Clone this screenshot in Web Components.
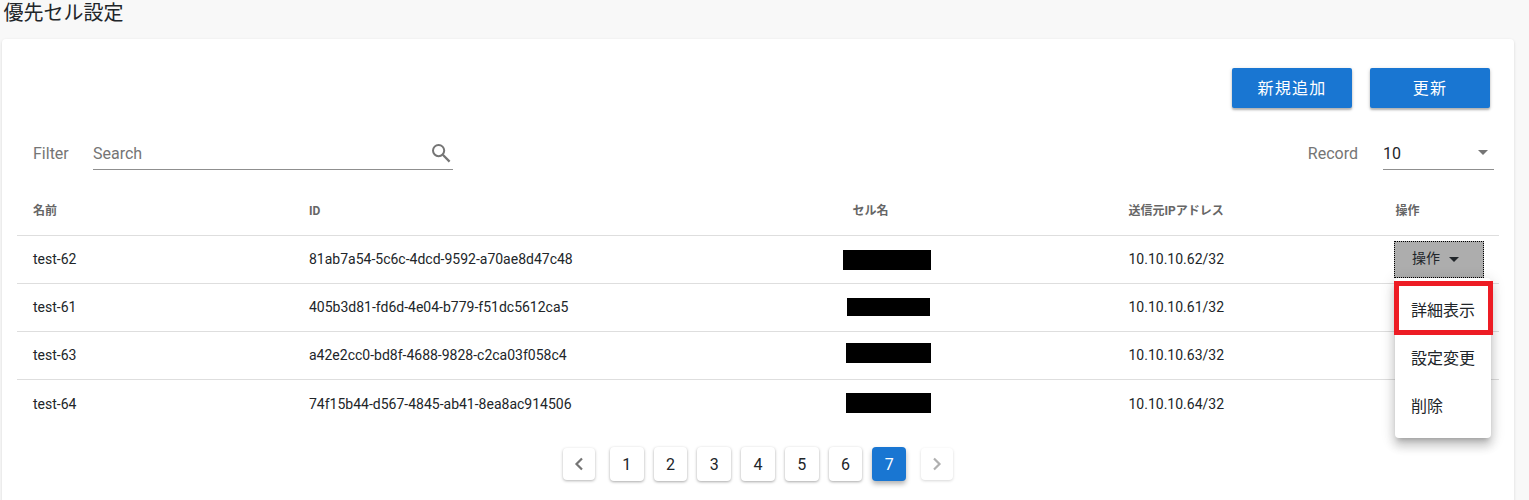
<!DOCTYPE html>
<html lang="ja"><head><meta charset="utf-8">
<style>
html,body{margin:0;padding:0;height:500px;overflow:hidden;background:#f8f8f8;}
body{font-family:Roboto,"Noto Sans CJK JP",sans-serif;color:#212529;}
</style></head><body>
<app-page></app-page>
<script>
const FONT='Roboto,"Noto Sans CJK JP",sans-serif';
function def(name,html,init){
  customElements.define(name,class extends HTMLElement{
    connectedCallback(){
      if(this.shadowRoot)return;
      const r=this.attachShadow({mode:'open'});
      r.innerHTML=typeof html==='function'?html(this):html;
      if(init)init(r,this);
    }
  });
}
def('app-button',`<style>:host{display:block}
button{display:block;width:120px;height:40px;border:0;border-radius:2px;background:#1976d2;color:#fff;font:16px ${FONT};letter-spacing:1.25px;padding:0 0 2px;
box-shadow:0 2px 2px rgba(0,0,0,.24),0 1px 4px rgba(0,0,0,.14);}</style><button><slot></slot></button>`);
def('search-field',`<style>:host{display:flex;align-items:center;height:33px;width:360px;border-bottom:1px solid #8f8f8f;justify-content:space-between;color:#757575;font-size:16px}
span{padding-top:2px}
svg{display:block;margin-right:2px}</style><span>Search</span>
<svg width="20" height="20" viewBox="0 0 20 20" fill="none" stroke="#757575" stroke-width="2"><circle cx="7.6" cy="7.6" r="5.6"/><path d="M11.8 11.8 18.6 18.6" stroke-width="2.3"/></svg>`);
def('record-select',`<style>:host{display:flex;align-items:center;justify-content:space-between;height:33px;width:111px;border-bottom:1px solid #8f8f8f;font-size:16px;color:#212529}
span{padding-top:2px}
i{display:block;width:0;height:0;border:5px solid transparent;border-top-color:#757575;border-bottom:0;margin-right:6px}</style><span>10</span><i></i>`);
const COLS='276px 500px 319.5px 251px 1fr';
def('table-head',`<style>:host{display:grid;grid-template-columns:${COLS};height:44px;padding-bottom:4px;align-items:center;padding-left:16px;width:1466px;border-bottom:1px solid #dedede;font-size:12px;font-weight:700;color:#666}
.cell{margin-left:43.5px}.op{margin-left:16px}.id{padding-top:4px}
</style><span>名前</span><span class="id">ID</span><span class="cell">セル名</span><span>送信元IPアドレス</span><span class="op">操作</span>`);
def('table-row',h=>`<style>:host{display:grid;grid-template-columns:${COLS};height:45px;padding-bottom:2px;align-items:center;padding-left:16px;width:1466px;border-bottom:1px solid #dedede;font-size:14px;color:#212529}
:host([last]){border-bottom:0;height:47px;padding-bottom:0}
.b{display:block;background:#000;height:${h.getAttribute('bh')||20}px;width:${h.getAttribute('bw')}px;margin-left:${h.getAttribute('bx')}px;position:relative;top:${h.getAttribute('bt')||0}px}</style>
<span>${h.getAttribute('n')}</span><span>${h.getAttribute('id')}</span><span><i class="b"></i></span><span>${h.getAttribute('ip')}</span><span><slot></slot></span>`);
def('action-menu',`<style>:host{display:block;position:relative;height:37px;width:90px;margin-left:14.5px;top:1px}
.btn{display:flex;align-items:center;padding:0 0 0 17px;gap:9px;box-sizing:border-box;width:90px;height:37px;background:#adadad;border:1px dotted #000;font-size:14px;color:#212529}
.btn span{padding-bottom:4px;line-height:20px}
.btn i{display:block;border:5px solid transparent;border-top-color:#212529;border-bottom:0;width:0;height:0;margin-top:0}
.menu{position:absolute;left:1px;top:37px;width:96px;height:160px;box-sizing:border-box;padding:9px 0 7px;background:#fff;border-radius:4px;z-index:3;
box-shadow:0 5px 5px -3px rgba(0,0,0,.2),0 8px 10px 1px rgba(0,0,0,.14),0 3px 14px 2px rgba(0,0,0,.12)}
.it{height:48px;line-height:48px;padding-left:16px;font-size:16px;color:#212529;position:relative;white-space:nowrap}
.hl{position:absolute;left:-1px;top:3px;width:99px;height:54px;box-sizing:border-box;border:5px solid #ed1c24}
</style><div class="btn"><span>操作</span><i></i></div>
<div class="menu"><div class="hl"></div><div class="it">詳細表示</div><div class="it">設定変更</div><div class="it">削除</div></div>`);
def('page-btn',`<style>:host{display:flex;align-items:center;justify-content:center;box-sizing:border-box;width:33.75px;height:34px;background:#fff;border-radius:4px;font-size:16px;color:#212529;
box-shadow:0 1px 3px rgba(0,0,0,.35)}
:host([on]){background:#1976d2;color:#fff;box-shadow:0 3px 5px rgba(0,0,0,.3)}
:host([nav]){width:32px;height:32px;box-shadow:0 1px 3px rgba(0,0,0,.3)}
:host([off]){box-shadow:0 1px 3px rgba(0,0,0,.16)}</style><slot></slot>`);
def('page-bar',`<style>:host{display:flex;justify-content:center;align-items:center;gap:10px;height:34px;margin-top:20px}
::slotted([nav]:first-child){margin-right:5px}::slotted([nav]:last-child){margin-left:5px}</style><slot></slot>`);
def('app-card',`<style>:host{display:block;width:1512px;height:480px;margin:0 0 0 2px;background:#fff;border-radius:4px;box-shadow:0 1px 3px rgba(0,0,0,.14);box-sizing:border-box;padding:29px 15px 0}</style><slot></slot>`);
def('tool-row',`<style>:host{display:flex;justify-content:flex-end;gap:18px;padding-right:9px;height:40px}</style><slot></slot>`);
def('filter-row',`<style>:host{display:flex;align-items:center;height:34px;margin-top:28px;font-size:16px;color:#757575;padding-left:16px;width:1461px}
.a{width:60px}.sp{flex:1}.r{margin-right:25px}</style><span class="a">Filter</span><slot name="s"></slot><span class="sp"></span><span class="r">Record</span><slot name="r"></slot>`);
def('app-page',`<style>:host{display:block;font-family:${FONT}}
h1{margin:0;font-weight:400;font-size:20px;line-height:26px;padding:0 0 0 3.5px;height:39px;color:#212529;box-sizing:border-box}
.t{margin-top:17px}</style>
<h1>優先セル設定</h1>
<app-card>
<tool-row><app-button>新規追加</app-button><app-button>更新</app-button></tool-row>
<filter-row><search-field slot="s"></search-field><record-select slot="r"></record-select></filter-row>
<div class="t">
<table-head></table-head>
<table-row n="test-62" id="81ab7a54-5c6c-4dcd-9592-a70ae8d47c48" ip="10.10.10.62/32" bx="34" bw="88" bt="1"><action-menu></action-menu></table-row>
<table-row n="test-61" id="405b3d81-fd6d-4e04-b779-f51dc5612ca5" ip="10.10.10.61/32" bx="38" bw="83" bh="18"></table-row>
<table-row n="test-63" id="a42e2cc0-bd8f-4688-9828-c2ca03f058c4" ip="10.10.10.63/32" bx="37" bw="85" bt="-2"></table-row>
<table-row n="test-64" id="74f15b44-d567-4845-ab41-8ea8ac914506" ip="10.10.10.64/32" bx="37" bw="85" bt="-1" last></table-row>
</div>
<page-bar>
<page-btn nav><svg width="10" height="14" viewBox="0 0 10 14" fill="none" stroke="#757575" stroke-width="2.2"><path d="M8 1.5 2.5 7 8 12.5"/></svg></page-btn>
<page-btn>1</page-btn><page-btn>2</page-btn><page-btn>3</page-btn><page-btn>4</page-btn><page-btn>5</page-btn><page-btn>6</page-btn><page-btn on>7</page-btn>
<page-btn nav off><svg width="10" height="14" viewBox="0 0 10 14" fill="none" stroke="#b0b0b0" stroke-width="2.2"><path d="M2 1.5 7.5 7 2 12.5"/></svg></page-btn>
</page-bar>
</app-card>`);
</script>
</body></html>
